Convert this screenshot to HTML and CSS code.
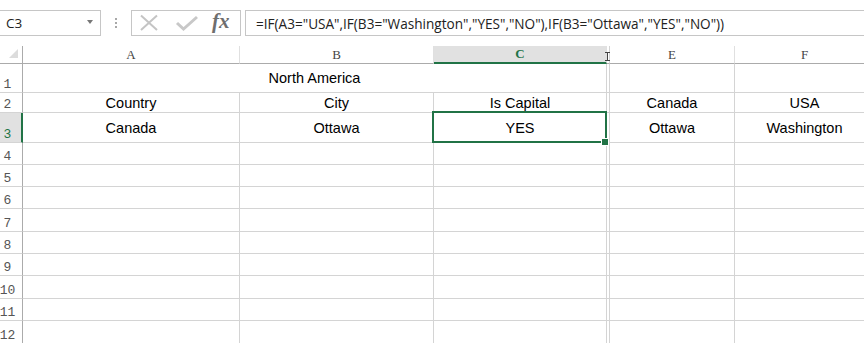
FILE: index.html
```html
<!DOCTYPE html>
<html lang="en">
<head>
<meta charset="utf-8">
<title>Sheet</title>
<link rel="stylesheet" href="styles.css">
</head>
<body>
<div class="app">
  <div class="formula-bar">
    <div class="name-box"><span class="name-text">C3</span><span class="drop"></span></div>
    <div class="dots"><i></i><i></i><i></i></div>
    <div class="fx-box">
      <svg class="fx-icons" width="78" height="24" viewBox="0 0 78 24">
        <path d="M9 4.5 L25 19 M25 4.5 L9 19" stroke="#c4c4c4" stroke-width="2" fill="none"/>
        <path d="M45 12 L51.5 18 L65 6" stroke="#c8c8c8" stroke-width="3" fill="none"/>
      </svg>
      <span class="fx">fx</span>
    </div>
    <div class="formula">=IF(A3="USA",IF(B3="Washington","YES","NO"),IF(B3="Ottawa","YES","NO"))</div>
  </div>

  <div class="sheet">
    <div class="cell corner"><span class="tri"></span></div>
    <div class="cell ch">A</div>
    <div class="cell ch">B</div>
    <div class="cell ch sel">C</div>
    <div class="cell ch hid"></div>
    <div class="cell ch">E</div>
    <div class="cell ch">F</div>

    <div class="cell rh">1</div>
    <div class="cell merged">North America</div>
    <div class="cell"></div>
    <div class="cell"></div>
    <div class="cell"></div>

    <div class="cell rh">2</div>
    <div class="cell">Country</div>
    <div class="cell">City</div>
    <div class="cell">Is Capital</div>
    <div class="cell"></div>
    <div class="cell">Canada</div>
    <div class="cell">USA</div>

    <div class="cell rh sel">3</div>
    <div class="cell">Canada</div>
    <div class="cell">Ottawa</div>
    <div class="cell">YES</div>
    <div class="cell"></div>
    <div class="cell">Ottawa</div>
    <div class="cell">Washington</div>

    <div class="cell rh">4</div><div class="cell"></div><div class="cell"></div><div class="cell"></div><div class="cell"></div><div class="cell"></div><div class="cell"></div>
    <div class="cell rh">5</div><div class="cell"></div><div class="cell"></div><div class="cell"></div><div class="cell"></div><div class="cell"></div><div class="cell"></div>
    <div class="cell rh">6</div><div class="cell"></div><div class="cell"></div><div class="cell"></div><div class="cell"></div><div class="cell"></div><div class="cell"></div>
    <div class="cell rh">7</div><div class="cell"></div><div class="cell"></div><div class="cell"></div><div class="cell"></div><div class="cell"></div><div class="cell"></div>
    <div class="cell rh">8</div><div class="cell"></div><div class="cell"></div><div class="cell"></div><div class="cell"></div><div class="cell"></div><div class="cell"></div>
    <div class="cell rh">9</div><div class="cell"></div><div class="cell"></div><div class="cell"></div><div class="cell"></div><div class="cell"></div><div class="cell"></div>
    <div class="cell rh">10</div><div class="cell"></div><div class="cell"></div><div class="cell"></div><div class="cell"></div><div class="cell"></div><div class="cell"></div>
    <div class="cell rh">11</div><div class="cell"></div><div class="cell"></div><div class="cell"></div><div class="cell"></div><div class="cell"></div><div class="cell"></div>
    <div class="cell rh">12</div><div class="cell"></div><div class="cell"></div><div class="cell"></div><div class="cell"></div><div class="cell"></div><div class="cell"></div>

    <svg class="ibeam" width="5" height="9" viewBox="0 0 5 9">
      <path d="M0 0.5 H5 M2.5 0.5 V8.5 M0 8.5 H5" stroke="#444" stroke-width="1" fill="none"/>
    </svg>
    <div class="selection"><span class="handle"></span></div>
  </div>
</div>
</body>
</html>
```

FILE: styles.css
```css
* { box-sizing: border-box; }

html, body {
  margin: 0;
  padding: 0;
  background: #fff;
}

body {
  width: 864px;
  height: 343px;
  overflow: hidden;
  font-family: "Liberation Sans", Arial, sans-serif;
}

.app {
  width: 864px;
  height: 343px;
  overflow: hidden;
}

/* ---------- formula bar ---------- */
.formula-bar {
  display: flex;
  align-items: flex-start;
  height: 46px;
  padding-top: 10px;
  width: 900px;
}

.name-box {
  width: 101px;
  height: 26px;
  border: 1px solid #c6c6c6;
  border-left: none;
  display: flex;
  align-items: center;
  justify-content: space-between;
  padding-left: 6px;
  padding-right: 7px;
  font-family: "Open Sans", "Noto Sans", sans-serif;
  font-size: 13.5px;
  color: #222;
}

.drop {
  width: 0;
  height: 0;
  border-left: 3px solid transparent;
  border-right: 3px solid transparent;
  border-top: 4px solid #777;
  margin-top: -2px;
}

.dots {
  width: 30px;
  height: 26px;
  display: flex;
  flex-direction: column;
  align-items: center;
  justify-content: center;
  gap: 2px;
  padding-right: 1px;
}

.dots i {
  display: block;
  width: 2px;
  height: 2px;
  background: #a8a8a8;
}

.fx-box {
  width: 110px;
  height: 26px;
  border: 1px solid #c6c6c6;
  display: flex;
  align-items: center;
}

.fx-icons {
  display: block;
  flex: none;
}

.fx {
  font-family: "Liberation Serif", "Times New Roman", serif;
  font-style: italic;
  font-weight: bold;
  font-size: 21px;
  color: #6e6e6e;
  margin-left: 2px;
  margin-top: -3px;
}

.formula {
  margin-left: 4px;
  flex: 1;
  height: 26px;
  border: 1px solid #c6c6c6;
  border-right: none;
  display: flex;
  align-items: center;
  padding-left: 10px;
  font-family: "Open Sans", "Noto Sans", sans-serif;
  font-size: 13.6px;
  color: #222;
  white-space: nowrap;
}

/* ---------- sheet grid ---------- */
.sheet {
  position: relative;
  display: grid;
  grid-template-columns: 23px 217px 194px 173px 3px 125px 140px;
  grid-template-rows: 18px 29px 20px 30px 22px 22px 22px 23px 22px 22px 23px 22px 23px 22px;
  width: 898px;
}

.cell {
  border-right: 1px solid #d4d4d4;
  border-bottom: 1px solid #d4d4d4;
  display: flex;
  align-items: center;
  justify-content: center;
  font-size: 14.5px;
  color: #000;
  white-space: nowrap;
  overflow: hidden;
}

.merged {
  grid-column: span 3;
}

.corner {
  position: relative;
  border-right: 1px solid #ababab;
  border-bottom: 1px solid #ababab;
}

.tri {
  position: absolute;
  left: 9px;
  top: 3px;
  width: 0;
  height: 0;
  border-left: 9px solid transparent;
  border-bottom: 9px solid #dcdcdc;
}

.ch {
  border-right: 1px solid #e0e0e0;
  border-bottom: 1px solid #ababab;
  font-family: "Liberation Serif", "Times New Roman", serif;
  font-size: 13px;
  color: #444;
  align-items: flex-end;
  padding-bottom: 0px;
}

.ch.sel {
  background: #e1e1e1;
  color: #217346;
  font-weight: bold;
  border-bottom: 2px solid #217346;
}

.ch.hid {
  border-right-color: #d4d4d4;
}

.rh {
  border-right: 1px solid #ababab;
  font-family: "Liberation Mono", "Courier New", monospace;
  font-size: 13px;
  color: #555;
  align-items: flex-end;
  justify-content: center;
  padding-right: 7px;
  padding-bottom: 0px;
}

.rh.sel {
  background: #e1e1e1;
  color: #217346;
  border-right: 2px solid #217346;
  padding-right: 6px;
}

/* overlays */
.ibeam {
  position: absolute;
  left: 605px;
  top: 6px;
}

.selection {
  position: absolute;
  left: 432px;
  top: 65px;
  width: 175px;
  height: 32px;
  border: 2px solid #217346;
}

.handle {
  position: absolute;
  right: -4px;
  bottom: -5px;
  width: 8px;
  height: 8px;
  background: #217346;
  border: 1px solid #fff;
}
```
